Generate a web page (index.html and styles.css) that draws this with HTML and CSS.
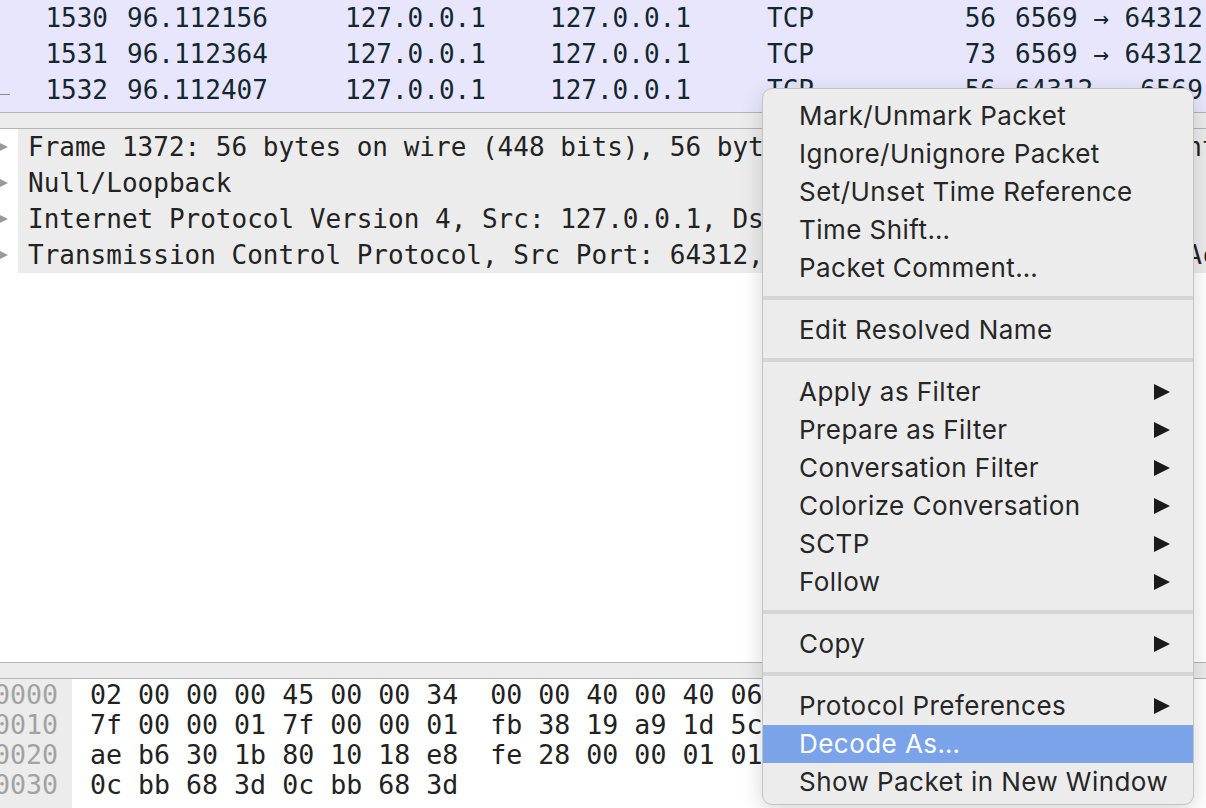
FILE: index.html
```html
<!DOCTYPE html>
<html>
<head>
<meta charset="utf-8">
<link rel="stylesheet" href="styles.css">
</head>
<body>
<div class="app">
  <div class="plist">
    <div class="prow">
      <span class="c-no">1530</span><span class="c-time">96.112156</span><span>127.0.0.1</span><span>127.0.0.1</span><span>TCP</span><span class="c-len">56</span><span class="c-info">6569 → 64312 [ACK] Seq=1 Ack=18 Win=6379 Len=0</span>
    </div>
    <div class="prow">
      <span class="c-no">1531</span><span class="c-time">96.112364</span><span>127.0.0.1</span><span>127.0.0.1</span><span>TCP</span><span class="c-len">73</span><span class="c-info">6569 → 64312 [PSH, ACK] Seq=1 Ack=18 Win=6379 Len=17</span>
    </div>
    <div class="prow">
      <span class="c-no"><i class="rel"></i>1532</span><span class="c-time">96.112407</span><span>127.0.0.1</span><span>127.0.0.1</span><span>TCP</span><span class="c-len">56</span><span class="c-info">64312 → 6569 [ACK] Seq=18 Ack=18 Win=6379 Len=0</span>
    </div>
  </div>
  <div class="splitter"></div>
  <div class="tree">
    <div class="trow"><span class="tri"></span><span class="ttext">Frame 1372: 56 bytes on wire (448 bits), 56 bytes captured (448 bits) on interface lo0, id 0</span></div>
    <div class="trow"><span class="tri"></span><span class="ttext">Null/Loopback</span></div>
    <div class="trow"><span class="tri"></span><span class="ttext">Internet Protocol Version 4, Src: 127.0.0.1, Dst: 127.0.0.1</span></div>
    <div class="trow"><span class="tri"></span><span class="ttext">Transmission Control Protocol, Src Port: 64312, Dst Port: 6569, Seq: 197, Ack: 18, Len: 0</span></div>
  </div>
  <div class="splitter"></div>
  <div class="hex">
    <div class="offsets">
      <div class="ln">0000</div>
      <div class="ln">0010</div>
      <div class="ln">0020</div>
      <div class="ln">0030</div>
    </div>
    <div class="bytes">
      <div class="ln">02 00 00 00 45 00 00 34  00 00 40 00 40 06 00 00   ....E..4 ..@.@...</div>
      <div class="ln">7f 00 00 01 7f 00 00 01  fb 38 19 a9 1d 5c 9a 0c   ........ .8...\..</div>
      <div class="ln">ae b6 30 1b 80 10 18 e8  fe 28 00 00 01 01 08 0a   ..0..... .(......</div>
      <div class="ln">0c bb 68 3d 0c bb 68 3d                            ..h=..h=</div>
    </div>
  </div>

  <div class="menu">
    <div class="mi">Mark/Unmark Packet</div>
    <div class="mi">Ignore/Unignore Packet</div>
    <div class="mi">Set/Unset Time Reference</div>
    <div class="mi">Time Shift…</div>
    <div class="mi">Packet Comment…</div>
    <div class="sep"></div>
    <div class="mi">Edit Resolved Name</div>
    <div class="sep"></div>
    <div class="mi"><span>Apply as Filter</span><svg class="arr" viewBox="0 0 16 16"><polygon points="0,0 16,8 0,16"/></svg></div>
    <div class="mi"><span>Prepare as Filter</span><svg class="arr" viewBox="0 0 16 16"><polygon points="0,0 16,8 0,16"/></svg></div>
    <div class="mi"><span>Conversation Filter</span><svg class="arr" viewBox="0 0 16 16"><polygon points="0,0 16,8 0,16"/></svg></div>
    <div class="mi"><span>Colorize Conversation</span><svg class="arr" viewBox="0 0 16 16"><polygon points="0,0 16,8 0,16"/></svg></div>
    <div class="mi"><span>SCTP</span><svg class="arr" viewBox="0 0 16 16"><polygon points="0,0 16,8 0,16"/></svg></div>
    <div class="mi"><span>Follow</span><svg class="arr" viewBox="0 0 16 16"><polygon points="0,0 16,8 0,16"/></svg></div>
    <div class="sep"></div>
    <div class="mi"><span>Copy</span><svg class="arr" viewBox="0 0 16 16"><polygon points="0,0 16,8 0,16"/></svg></div>
    <div class="sep"></div>
    <div class="mi"><span>Protocol Preferences</span><svg class="arr" viewBox="0 0 16 16"><polygon points="0,0 16,8 0,16"/></svg></div>
    <div class="mi active">Decode As…</div>
    <div class="mi">Show Packet in New Window</div>
  </div>
</div>
</body>
</html>
```

FILE: styles.css
```css
html, body {
  margin: 0;
  padding: 0;
  background: #ffffff;
}
body {
  width: 1206px;
  height: 808px;
  overflow: hidden;
}
.app {
  position: relative;
  width: 1206px;
  height: 808px;
  display: flex;
  flex-direction: column;
  overflow: hidden;
  font-family: "DejaVu Sans Mono", monospace;
}

/* packet list */
.plist {
  height: 112px;
  flex: none;
  background: #e7e6fd;
  overflow: hidden;
}
.prow {
  display: grid;
  grid-template-columns: 108px 237px 205px 217px 134px 95px 1fr;
  height: 36px;
  line-height: 36px;
  font-size: 26px;
  color: #13272f;
  white-space: nowrap;
}
.prow span { overflow: hidden; }
.c-no { text-align: right; position: relative; overflow: visible !important; }
.c-time { padding-left: 19px; }
.c-len { text-align: right; }
.c-info { padding-left: 19px; overflow: visible !important; }
.rel {
  position: absolute;
  left: 0;
  top: 22px;
  width: 10px;
  height: 1px;
  background: #8a8a8a;
}

.splitter {
  flex: none;
  height: 15px;
  background: #ececec;
  border-top: 1px solid #b4b4b4;
  border-bottom: 1px solid #b4b4b4;
}

/* tree */
.tree {
  flex: 1;
  background: #ffffff;
  overflow: hidden;
}
.trow {
  display: flex;
  align-items: center;
  height: 36px;
  white-space: nowrap;
}
.tri {
  flex: none;
  width: 18px;
  height: 36px;
  position: relative;
}
.tri::before {
  content: "";
  position: absolute;
  left: 0;
  top: 14px;
  border-left: 8px solid #9a9a9a;
  border-top: 4px solid transparent;
  border-bottom: 4px solid transparent;
}
.ttext {
  flex: 1;
  height: 36px;
  line-height: 36px;
  background: #ececec;
  padding-left: 10px;
  font-size: 26px;
  color: #222222;
  overflow: hidden;
}

/* hex */
.hex {
  flex: none;
  height: 129px;
  display: flex;
  font-size: 26.6px;
  line-height: 30px;
  overflow: hidden;
}
.ln {
  height: 30px;
  white-space: pre;
}
.offsets {
  flex: none;
  width: 72px;
  background: #ececec;
  color: #a2a2a2;
  padding-right: 14px;
  box-sizing: border-box;
  padding-top: 1px;
  overflow: hidden;
  display: flex;
  flex-direction: column;
  align-items: flex-end;
}
.bytes {
  flex: 1;
  padding-left: 18px;
  padding-top: 1px;
  color: #222222;
  overflow: hidden;
}

/* context menu */
.menu {
  position: absolute;
  left: 762px;
  top: 88px;
  width: 432px;
  box-sizing: border-box;
  padding: 8px 0 3px;
  background: #ececec;
  border: 1px solid #c4c4c4;
  border-radius: 10px;
  box-shadow: 0 6px 22px rgba(0, 0, 0, 0.16);
  font-family: "Inter", "Liberation Sans", sans-serif;
  font-size: 26px;
  letter-spacing: 0.45px;
  color: #262626;
}
.mi {
  display: flex;
  align-items: center;
  justify-content: space-between;
  height: 38px;
  line-height: 38px;
  padding: 0 23px 0 36px;
  white-space: nowrap;
}
.mi.active {
  background: #7aa3ea;
  color: #ffffff;
}
.arr {
  width: 16px;
  height: 16px;
  fill: #1a1a1a;
  flex: none;
}
.sep {
  height: 4px;
  margin: 9px 0 11px;
  background: #d5d5d5;
}
```
